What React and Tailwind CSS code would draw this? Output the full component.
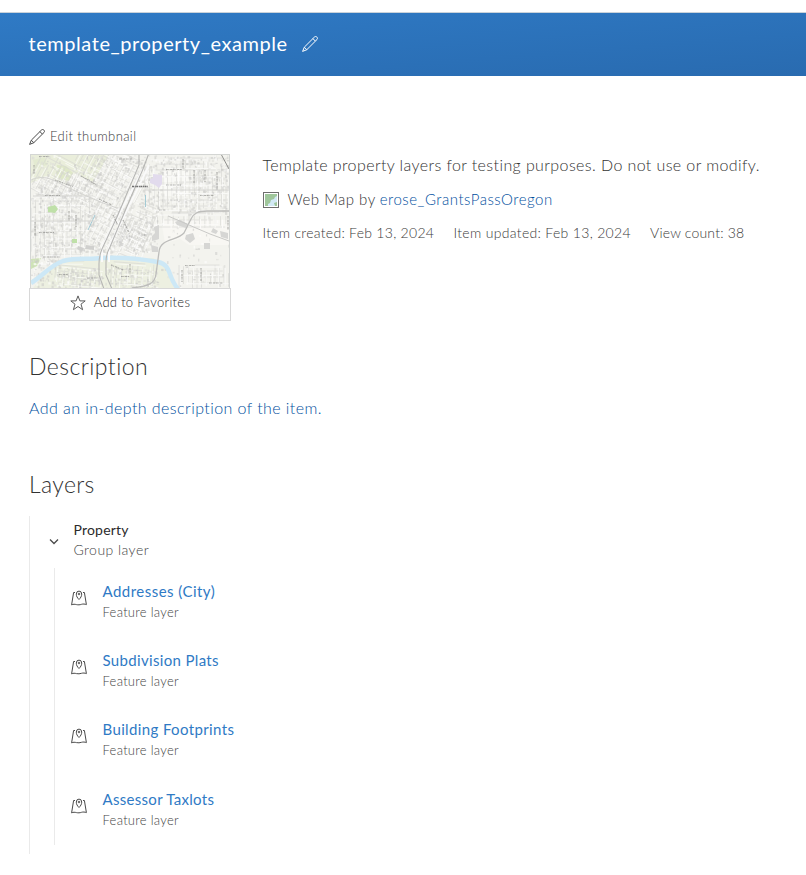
import React from "react";

function Pencil({ className }) {
  return (
    <svg className={className} viewBox="0 0 16 16" fill="none" stroke="currentColor" strokeWidth="1">
      <path d="M14.900 1.100c-.8-.8-1.700-.8-2.400-.1L2.300 11.200.6 15.400l4.200-1.700L15 3.500c.7-.7.7-1.600-.1-2.400ZM10.900 2.600l2.500 2.500M2.300 11.200l2.500 2.500" />
    </svg>
  );
}

function MapPin() {
  return (
    <svg className="h-4 w-4 shrink-0 text-[#4a4a4a]" viewBox="0 0 16 16" fill="none" stroke="currentColor">
      <path d="M4 2.500H2.600L.6 14.900c1.700-.9 3.200-.7 4.900-.3 1.700.4 3.300.3 5-.3 1.700-.500 3.300-.300 4.900.3L13.400 2.500H12" />
      <path d="M8 9.500C6.300 7.800 5.300 6.200 5.300 4.100a2.700 3 0 0 1 5.400 0C10.700 6.200 9.700 7.800 8 9.500Z" />
      <circle cx="8" cy="4" r=".8" />
    </svg>
  );
}

function rng(seed) {
  let s = seed;
  return () => {
    s = (s * 16807) % 2147483647;
    return s / 2147483647;
  };
}

// Street blocks: x, y, width, height, spacing, rotation, seed
const DISTRICTS = [
  [1, 2, 48, 46, 7, 28, 11],
  [20, 22, 80, 36, 6, 28, 23],
  [44, -6, 72, 42, 6, 28, 37],
  [0, 40, 62, 68, 6, 0, 41],
  [56, 54, 42, 46, 6, 28, 53],
  [92, 48, 27, 55, 5, 22, 67],
  [114, 3, 85, 55, 6, 0, 71],
  [116, 58, 82, 15, 7, 0, 79],
  [90, 72, 27, 26, 4, 28, 83],
  [24, 112, 48, 20, 6, 6, 97],
  [80, 108, 42, 26, 7, 4, 101],
  [148, 110, 50, 24, 6, 0, 113],
];

function streets([x, y, w, h, step, , seed]) {
  const r = rng(seed * 7919);
  let d = "";
  for (let a = 0; a <= w; a += step * 0.75) {
    const s = r() * h * 0.35;
    const e = h - r() * h * 0.3;
    d += `M${(x + a).toFixed(1)} ${(y + s).toFixed(1)}V${(y + e).toFixed(1)}`;
  }
  for (let b = 0; b <= h; b += step) {
    const s = r() * w * 0.35;
    const e = w - r() * w * 0.3;
    d += `M${(x + s).toFixed(1)} ${(y + b).toFixed(1)}H${(x + e).toFixed(1)}`;
  }
  return d;
}

function specks() {
  const r = rng(4242);
  const out = [];
  for (let i = 0; i < 2600; i++) {
    const x = r() * 198;
    const y = r() * 133;
    const o = r();
    if (y > 98 && y < 112 && x > 30 && x < 130) continue;
    if (x > 126 && y > 58 && o > 0.12) continue;
    if (x > 130 && x < 158 && y > 15 && y < 41 && o > 0.2) continue;
    if (x < 60 && y < 25 && o > 0.35) continue;
    out.push([x, y, 1 + r() * 1.6, 1 + r() * 2, r()]);
  }
  return out;
}

const LABELS = [
  [88, 4, 14, 0], [8, 1.5, 11, 0], [135, 14.5, 16, 0], [135, 30, 15, 0],
  [14, 40.5, 15, 0], [24, 25, 19, 20], [50, 21, 17, 30], [169, 40.5, 14, 0], [68, 44, 14, 25],
  [128, 55, 7, 0], [8, 77.5, 15, 0], [113, 80, 4, 0], [80, 110, 13, 22], [99, 109, 11, 90],
  [90, 121.5, 8, 0], [154, 110.5, 10, 0], [178, 128, 14, 0], [28, 119.5, 9, 0],
  [163, 15, 13, 90], [174, 15, 12, 90], [186, 17, 18, 90], [197, 61, 14, 90], [152, 4, 10, 90],
  [56, 123, 10, 0], [38, 56, 10, 90], [45, 60, 12, 90], [12, 102, 18, 0], [151, 115, 12, 90],
  [170, 113, 13, 90], [3, 10, 9, 90], [92, 65, 13, 65], [82, 60, 10, 65], [4, 67, 14, 90],
];

function Basemap() {
  return (
    <svg className="block h-[133px] w-[198px]" viewBox="0 0 198 133" fill="none">
      <rect width="198" height="133" fill="#f3f3ee" />
      <path d="M0 0h78l-16 27-20-9-7 11-20-8-15 7Z" fill="#eaeedb" />
      <path d="M26 10l9 1 7 7-4 8-10-3-3-5Z" fill="#dfe8c8" />
      <path d="M2 5l12-3 2 8-12 4Z" fill="#e3ead1" />
      <path d="M130 65h68v25h-40l-9-6-15 4Z" fill="#f8f7f3" />
      <path d="M131 15h27v12h-27zM129 30h28v11h-28z" fill="#f9f9f5" />
      <path d="M2 133 25 106 42 103l80 0 12 7 10 23H2Z" fill="#edf0e1" />
      <path d="M0 104l10-1-4 8-6 3Z" fill="#cfe4b6" />
      {DISTRICTS.map((d) => (
        <g key={d[6]} transform={`rotate(${d[5]} ${d[0] + d[2] / 2} ${d[1] + d[3] / 2})`} opacity=".6">
          <path d={streets(d)} stroke="#d6d6d3" strokeWidth="1" />
          <path d={streets([d[0] + 2, d[1] + 2, d[2], d[3], d[4] * 1.4, d[5], d[6] + 3])} stroke="#ffffff" strokeWidth="1" />
        </g>
      ))}
      {specks().map(([x, y, w, h, o], i) => (
        <rect key={i} x={x} y={y} width={w} height={h} fill={o > 0.6 ? "#c9c9c6" : o > 0.25 ? "#dcdcd9" : "#ffffff"} opacity=".55" />
      ))}
      <path d="M17 52l7-2 3 4-3 4-7-1ZM41 84h5v4h-5z" fill="#bfe0a8" />
      <path d="M122 19l9 1v9l-3 4-4-3-5-2v-4l3-1Z" fill="#e2dbed" />
      <path d="M144 67l5-2 8 4-2 4-9-3ZM123 72l5-2v14l-7 2v-5l3-3ZM155 80l7-2 2 6-5 4-5-4ZM173 88h6v6h-6zM189 76l8 2v6l-7-2ZM120 90l7 2v5h-6ZM182 73l5 3-2 3-5-2Z" fill="#d6d6d4" />
      <path d="M55 90l8 1v4l-9-1ZM47 91l6 2-2 4-5-3Z" fill="#d0d0ce" />
      <path d="M0 128C12 121 18 111 32 106c15-4 25-1 39-3 22-1 39 1 56 4 14 3 9 14 20 27" stroke="#cde8f6" strokeWidth="4.500" />
      <path d="M64 60l-7 15M114.500 40v12" stroke="#a3cad4" strokeWidth="1" />
      <path d="M0 25c16-7 24 2 42 10 18 8 29 13 44 18M114 35h84M2 41h58M0 66h66" stroke="#d4d4d1" />
      <path d="M112 14 71 92v15M118 10 78 92v15" stroke="#fafafa" strokeWidth="2" />
      <path d="M108-2v12Q99 31 86 62L71 94q-3 7-3 15v11l5 14M118-2 112 14 94 56 79 92q-4 7-4 15v13l6 14" stroke="#b6b6b4" strokeWidth="1.100" />
      <path d="M101 133c18-2 23-5 24-14l3-22c1-14 18-11 25-19l7-14c3-6 7-8 16-8h22" stroke="#bdbdbb" strokeWidth="1.300" />
      <path d="M137 61l42 18 19 7" stroke="#c9c9c7" />
      <path d="M190-1l8 15" stroke="#8f8f8d" />
      {LABELS.map(([x, y, w, a], i) => (
        <path key={i} d={`M${x} ${y}h${w}`} transform={`rotate(${a} ${x} ${y})`} stroke="#8c8c88" strokeWidth="1.200" strokeDasharray="1.7 .7 .8 .9 2.3 .6" opacity=".65" />
      ))}
      <path d="M101 31.500h16" stroke="#6d6d6d" strokeWidth="1.300" strokeDasharray="2 .7 1 .5" />
    </svg>
  );
}

const LAYERS = [
  ["Addresses (City)", "tracking-[0.47px]", "h-[69px]"],
  ["Subdivision Plats", "tracking-[0.34px]", "h-[69px]"],
  ["Building Footprints", "tracking-[0.37px]", "h-[70px]"],
  ["Assessor Taxlots", "tracking-[0.3px]", "h-[69px]"],
];

export default function App() {
  return (
    <div className="h-[875px] w-[806px] overflow-hidden bg-white pt-3 font-['Lato','Open_Sans',sans-serif] text-[#323232]">
      <header className="flex h-16 items-center border-t border-[#c9d2da] bg-linear-to-br from-[#2f7ac5] to-[#296bb0] pl-[28.500px] text-white">
        <h1 className="whitespace-nowrap pb-[4px] text-[20px] leading-6 tracking-[0.56px]">template_property_example</h1>
        <Pencil className="mb-px ml-[14px] h-4 w-4" />
      </header>

      <main className="px-[29px] pt-[52px]">
        <section className="flex h-[192px]">
          <div className="w-[202px] shrink-0">
            <div className="flex h-[26px] items-center pb-[9px] text-[13px] leading-4 text-[#3c3c3c]">
              <Pencil className="mt-px mr-[5px] h-4 w-4 text-[#4a4a4a]" />
              <span className="whitespace-nowrap pb-px font-light tracking-[0.4px]">Edit thumbnail</span>
            </div>
            <div className="mx-px h-[134px] w-[200px] overflow-hidden border-x border-t border-[#d4d6d4]">
              <Basemap />
            </div>
            <div className="flex h-[33px] items-center justify-center border border-[#d8d8d8] pb-[3px] text-[13px] text-[#222]">
              <svg className="mr-2 h-4 w-4" viewBox="0 0 16 16" fill="none" stroke="#5c5c5c">
                <path d="m8 .9 1.900 5h5.300l-4.200 3.300 1.600 5.500L8 11.500l-4.600 3.200L5 9.200.8 5.900h5.300Z" />
              </svg>
              <span className="whitespace-nowrap font-light tracking-[0.29px]">Add to Favorites</span>
            </div>
          </div>

          <div className="ml-[31.500px] whitespace-nowrap pt-[25px] font-light">
            <p className="h-[34px] text-[16px] leading-6 tracking-[0.4px]">
              Template property layers for testing purposes. Do not use or modify.
            </p>
            <p className="flex h-[34px] items-center pb-[8px] text-[15px] leading-6">
              <svg className="mr-[9px] h-4 w-4" viewBox="0 0 16 16">
                <rect x=".5" y=".5" width="15" height="15" fill="#fff" stroke="#6e6e6e" />
                <path d="M2 2h12v12H2Z" fill="#d2e9f5" />
                <path d="M2 2h12v2l-2 1-1 2-3 1-1 3-2 1v2H2ZM11 11l3-1v4h-2Z" fill="#9fc69b" />
              </svg>
              <span className="pb-[2px] tracking-[0.5px]">Web Map by</span>
              <a className="ml-1 pb-[2px] tracking-[0.52px] text-[#004f9e]">erose_GrantsPassOregon</a>
            </p>
            <p className="flex h-6 text-[14px] leading-[24px] text-[#3a3a3a]">
              <span className="w-[191px] tracking-[0.28px]">Item created: Feb 13, 2024</span>
              <span className="w-[196.500px] tracking-[0.32px]">Item updated: Feb 13, 2024</span>
              <span className="tracking-[0.2px]">View count: 38</span>
            </p>
          </div>
        </section>

        <section className="h-[142px] pt-[30px] font-light">
          <h2 className="text-[23px] leading-8 tracking-[0.45px]">Description</h2>
          <a className="mt-[14px] block text-[16px] leading-6 tracking-[0.43px] text-[#004f9e]">
            Add an in-depth description of the item.
          </a>
        </section>

        <section>
          <h2 className="pt-[6px] text-[23px] leading-8 font-light tracking-[0.35px]">Layers</h2>
          <div className="mt-[16px] h-[338px] border-l border-[#eaeaea] pl-[16px]">
            <div className="flex h-[52px] pt-[4px]">
              <svg className="mt-[13px] mr-[11.500px] h-4 w-4" viewBox="0 0 16 16" fill="none" stroke="#4a4a4a" strokeWidth="1.300">
                <path d="m4 6.500 4 4 4-4" />
              </svg>
              <div className="whitespace-nowrap text-[14px] leading-5">
                <p className="tracking-[0.2px] text-[#2b2b2b]">Property</p>
                <p className="font-light tracking-[0.45px] text-[#444]">Group layer</p>
              </div>
            </div>
            <ul className="ml-[8px] h-[277px] border-l border-[#eaeaea] pl-[16px]">
              {LAYERS.map(([name, track, height]) => (
                <li key={name} className={`flex items-start pt-[13px] ${height}`}>
                  <div className="mt-[9px] mr-[15.500px]"><MapPin /></div>
                  <div className="whitespace-nowrap">
                    <a className={`block text-[15px] leading-5 text-[#2f7ac5] ${track}`}>{name}</a>
                    <p className="text-[13px] leading-[22px] font-light tracking-[0.28px] text-[#444]">Feature layer</p>
                  </div>
                </li>
              ))}
            </ul>
          </div>
        </section>
      </main>
    </div>
  );
}
